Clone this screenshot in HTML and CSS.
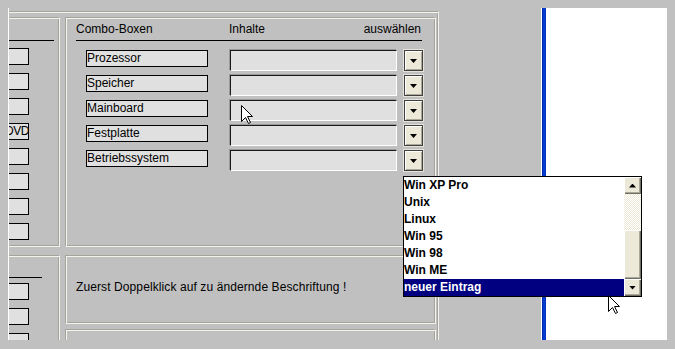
FILE: index.html
```html
<!DOCTYPE html>
<html lang="de">

<head>
  <meta charset="UTF-8">
  <meta name="viewport" content="width=device-width, initial-scale=1.0">
  <title>Combo-Boxen</title>
  <link rel="stylesheet" href="styles.css">
</head>

<body>
  <div class="screen">
    <div class="workspace">
      <div class="frame">
        <!-- left column, cut off by the window edge -->
        <div class="col col-left">
          <div class="panel panel-cut panel-top">
            <div class="stub-head"></div>
            <div class="stub-list">
              <div class="stub"></div>
              <div class="stub"></div>
              <div class="stub"></div>
              <div class="stub"><span>DVD</span></div>
              <div class="stub"></div>
              <div class="stub"></div>
              <div class="stub"></div>
              <div class="stub"></div>
            </div>
          </div>
          <div class="panel panel-cut panel-rest">
            <div class="stub-head short"></div>
            <div class="stub-list low">
              <div class="stub"></div>
              <div class="stub"></div>
              <div class="stub"></div>
            </div>
          </div>
        </div>

        <div class="col col-main">
          <div class="panel panel-top">
            <div class="combo-head">
              <span class="head-name">Combo-Boxen</span>
              <span class="head-content">Inhalte</span>
              <span class="head-pick">auswählen</span>
            </div>
            <div class="combo-rows">
              <div class="combo-row">
                <div class="combo-label">Prozessor</div>
                <div class="combo-field"></div>
                <button class="combo-btn"><span class="arrow-down"></span></button>
              </div>
              <div class="combo-row">
                <div class="combo-label">Speicher</div>
                <div class="combo-field"></div>
                <button class="combo-btn"><span class="arrow-down"></span></button>
              </div>
              <div class="combo-row">
                <div class="combo-label">Mainboard</div>
                <div class="combo-field"></div>
                <button class="combo-btn"><span class="arrow-down"></span></button>
              </div>
              <div class="combo-row">
                <div class="combo-label">Festplatte</div>
                <div class="combo-field"></div>
                <button class="combo-btn"><span class="arrow-down"></span></button>
              </div>
              <div class="combo-row">
                <div class="combo-label">Betriebssystem</div>
                <div class="combo-field"></div>
                <button class="combo-btn"><span class="arrow-down"></span></button>
              </div>
            </div>
          </div>
          <div class="panel panel-hint">
            <p>Zuerst Doppelklick auf zu ändernde Beschriftung !</p>
          </div>
          <div class="panel panel-rest"></div>
        </div>
      </div>
    </div>
    <div class="splitter"></div>
    <div class="side"></div>

    <!-- open list of the last combo box -->
    <div class="dropdown">
      <ul class="drop-items">
        <li>Win XP Pro</li>
        <li>Unix</li>
        <li>Linux</li>
        <li>Win 95</li>
        <li>Win 98</li>
        <li>Win ME</li>
        <li class="active">neuer Eintrag</li>
      </ul>
      <div class="scroll">
        <div class="scroll-btn"><span class="arrow-up"></span></div>
        <div class="scroll-track"></div>
        <div class="scroll-thumb"></div>
        <div class="scroll-btn"><span class="arrow-down"></span></div>
      </div>
    </div>

    <svg class="cursor cursor-a" width="13" height="20" viewBox="0 0 13 20">
      <polygon points="0.5,0.5 0.5,16.5 4.5,12.5 7.5,18.5 9.5,17.5 6.5,11.5 11.5,11.5" fill="#fff" stroke="#000" stroke-width="1" />
    </svg>
    <svg class="cursor cursor-b" width="13" height="20" viewBox="0 0 13 20">
      <polygon points="0.5,0.5 0.5,16.5 4.5,12.5 7.5,18.5 9.5,17.5 6.5,11.5 11.5,11.5" fill="#fff" stroke="#000" stroke-width="1" />
    </svg>
  </div>
</body>

</html>
```

FILE: styles.css
```css
* {
  padding: 0;
  margin: 0;
  box-sizing: border-box;
  font-family: "Liberation Sans", Arial, sans-serif;
}

body {
  background-color: #c0c0c0;
  font-size: 12px;
  color: #000;
}

.screen {
  position: relative;
  display: flex;
  height: 349px;
  padding: 8px 8px 9px 8px;
}

.workspace {
  width: 533px;
  border-left: 1px solid #ffffff;
  overflow: hidden;
}

.frame {
  display: flex;
  gap: 5px;
  width: 430px;
  height: 100%;
  margin-top: 3px;
  padding: 5px 2px 0 0;
  border-top: 1px solid #a5a49c;
  border-right: 1px solid #f4f4ec;
  box-shadow: inset 0 1px #f4f4ec, inset -1px 0 #a5a49c;
}

.col {
  display: flex;
  flex-direction: column;
}

.col-left {
  width: 51px;
}

.col-main {
  width: 371px;
}

/* etched frames */
.panel {
  flex-shrink: 0;
  border: 1px solid;
  border-color: #a5a49c #f4f4ec #f4f4ec #a5a49c;
  box-shadow: inset 1px 1px #f4f4ec, inset -1px -1px #a5a49c;
}

.panel-cut {
  border-left: 0;
  box-shadow: inset 0 1px #f4f4ec, inset -1px -1px #a5a49c;
}

.panel-top {
  height: 230px;
  margin-bottom: 8px;
}

.panel-hint {
  height: 69px;
  margin-bottom: 5px;
}

.panel-rest {
  height: 120px;
}

/* left column */
.stub-head {
  height: 23px;
  margin-right: 5px;
  border-bottom: 1px solid #000;
}

.stub-head.short {
  height: 22px;
  margin-right: 17px;
}

.stub-list {
  display: flex;
  flex-direction: column;
  gap: 8px;
  margin-top: 7px;
}

.stub-list.low {
  margin-top: 5px;
}

.stub {
  width: 20px;
  height: 17px;
  border: 1px solid #000;
  border-left: 0;
  background-color: #e0e0e0;
  overflow: hidden;
  white-space: nowrap;
  line-height: 15px;
}

.stub span {
  display: block;
  margin-left: -4px;
  letter-spacing: -0.5px;
}

/* combo boxes */
.combo-head {
  display: flex;
  height: 23px;
  line-height: 23px;
  margin: 0 13px 0 10px;
  border-bottom: 1px solid #000;
}

.head-name {
  width: 153px;
}

.head-content {
  flex: 1;
}

.head-pick {
  padding-right: 1px;
}

.combo-rows {
  display: flex;
  flex-direction: column;
  gap: 4px;
  margin-top: 9px;
  padding-left: 20px;
}

.combo-row {
  display: flex;
  align-items: flex-start;
  height: 21px;
}

.combo-label {
  width: 122px;
  height: 17px;
  margin-right: 22px;
  border: 1px solid #000;
  background-color: #e0e0e0;
  line-height: 15px;
  white-space: nowrap;
}

.combo-field {
  width: 167px;
  height: 21px;
  border: 1px solid;
  border-color: #1a1a1a #ffffff #ffffff #1a1a1a;
  background-color: #e0e0e0;
  box-shadow: -1px -1px 0 #9a9a94;
}

.combo-btn {
  display: flex;
  justify-content: center;
  align-items: center;
  width: 19px;
  height: 21px;
  margin-left: 7px;
  padding-top: 1px;
  border: 1px solid #404040;
  background-color: #ece9d8;
  box-shadow: inset 1px 1px #ffffff, inset -1px -1px #aca899, 0 0 0 1px #e6e4da;
}

.arrow-down,
.arrow-up {
  display: block;
  width: 7px;
  height: 4px;
  background-color: #000;
}

.arrow-down {
  clip-path: polygon(0 0, 100% 0, 50% 100%);
}

.arrow-up {
  clip-path: polygon(50% 0, 100% 100%, 0 100%);
}

.panel-hint p {
  padding: 24px 0 0 10px;
  line-height: 14px;
  letter-spacing: 0.1px;
}

/* open list */
.dropdown {
  position: absolute;
  left: 403px;
  top: 176px;
  display: flex;
  width: 239px;
  height: 121px;
  border: 1px solid #000;
  background-color: #ffffff;
}

.drop-items {
  flex: 1;
  list-style: none;
}

.drop-items li {
  height: 17px;
  line-height: 17px;
  font-weight: 700;
  white-space: nowrap;
}

.drop-items li.active {
  background-color: #000080;
  color: #ffffff;
}

.scroll {
  display: flex;
  flex-direction: column;
  width: 17px;
}

.scroll-btn,
.scroll-thumb {
  background-color: #ece9d8;
  box-shadow: inset 1px 1px #ffffff, inset -1px -1px #716f64, inset -2px -2px #aca899;
}

.scroll-btn {
  display: flex;
  justify-content: center;
  align-items: center;
  height: 17px;
}

.scroll-track {
  height: 36px;
  background: repeating-conic-gradient(#ece9d8 0 25%, #ffffff 0 50%) 0 0 / 2px 2px;
}

.scroll-thumb {
  height: 49px;
}

.splitter {
  width: 5px;
  border-left: 1px solid #ffffff;
  background: linear-gradient(to right, #0024a8, #0a40d8, #0030c0);
}

.side {
  width: 121px;
  background-color: #ffffff;
}

.cursor {
  position: absolute;
}

.cursor-a {
  left: 241px;
  top: 105px;
}

.cursor-b {
  left: 608px;
  top: 295px;
}
```
